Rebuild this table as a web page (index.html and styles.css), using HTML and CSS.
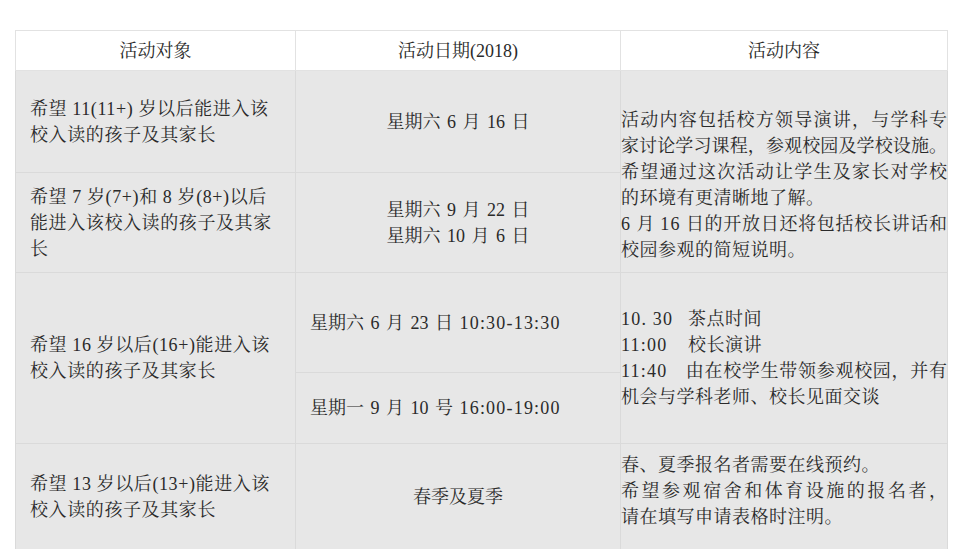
FILE: index.html
```html
<!DOCTYPE html>
<html lang="zh-CN">
<head>
<meta charset="utf-8">
<title>开放日活动</title>
<link rel="stylesheet" href="styles.css">
</head>
<body>
<table class="events">
  <colgroup>
    <col class="col-a">
    <col class="col-b">
    <col class="col-c">
  </colgroup>
  <thead>
    <tr class="head-row">
      <th>活动对象</th>
      <th>活动日期(2018)</th>
      <th>活动内容</th>
    </tr>
  </thead>
  <tbody>
    <tr class="row-1">
      <td class="who">希望 11(11+) 岁以后能进入该<br>校入读的孩子及其家长</td>
      <td class="when">星期六 6 月 16 日</td>
      <td class="what what-top" rowspan="2">
        <span class="line fill">活动内容包括校方领导演讲，与学科专</span>
        <span class="line fill">家讨论学习课程，参观校园及学校设施。</span>
        <span class="line fill">希望通过这次活动让学生及家长对学校</span>
        <span class="line">的环境有更清晰地了解。</span>
        <span class="line fill"><span class="num">6</span> 月 <span class="num">16</span> 日的开放日还将包括校长讲话和</span>
        <span class="line">校园参观的简短说明。</span>
      </td>
    </tr>
    <tr class="row-2">
      <td class="who">希望 7 岁(7+)和 8 岁(8+)以后<br>能进入该校入读的孩子及其家<br>长</td>
      <td class="when">星期六 9 月 22 日<br>星期六 10 月 6 日</td>
    </tr>
    <tr class="row-3a">
      <td class="who" rowspan="2">希望 16 岁以后(16+)能进入该<br>校入读的孩子及其家长</td>
      <td class="when when-left">星期六 6 月 23 日 <span class="num">10:30-13:30</span></td>
      <td class="what" rowspan="2">
        <span class="line"><span class="num time">10. 30</span>茶点时间</span>
        <span class="line"><span class="num time">11:00</span>校长演讲</span>
        <span class="line fill"><span class="num time-short">11:40</span>由在校学生带领参观校园，并有</span>
        <span class="line">机会与学科老师、校长见面交谈</span>
      </td>
    </tr>
    <tr class="row-3b">
      <td class="when when-left">星期一 9 月 10 号 <span class="num">16:00-19:00</span></td>
    </tr>
    <tr class="row-4">
      <td class="who">希望 13 岁以后(13+)能进入该<br>校入读的孩子及其家长</td>
      <td class="when">春季及夏季</td>
      <td class="what what-last">
        <span class="line">春、夏季报名者需要在线预约。</span>
        <span class="line fill">希望参观宿舍和体育设施的报名者，</span>
        <span class="line">请在填写申请表格时注明。</span>
      </td>
    </tr>
  </tbody>
</table>
</body>
</html>
```
FILE: styles.css
```css
html, body {
  margin: 0;
  padding: 0;
  background: #ffffff;
}

body {
  font-family: "Liberation Serif", "Noto Serif CJK SC", "Noto Sans CJK SC", serif;
  font-size: 18px;
  line-height: 26px;
  color: #2a2a2a;
}

.events {
  margin: 30px 0 0 15px;
  width: 932px;
  border-collapse: collapse;
  table-layout: fixed;
}

.col-a { width: 280px; }
.col-b { width: 325px; }
.col-c { width: 327px; }

.events th,
.events td {
  border: 1px solid #dadada;
  padding: 0;
  white-space: nowrap;
}

.head-row {
  height: 40px;
}

.events th {
  background: #ffffff;
  font-weight: normal;
  text-align: center;
  vertical-align: middle;
  border-color: #e2e2e2;
}

.events td {
  background: #e7e7e7;
  vertical-align: middle;
}

.row-1 { height: 102px; }
.row-2 { height: 100px; }
.row-3a { height: 100px; }
.row-3b { height: 71px; }
.row-4 { height: 106px; }

.events .who {
  padding-left: 14px;
  text-align: left;
  letter-spacing: 0.6px;
}

.events .when {
  text-align: center;
  word-spacing: 2px;
}

.events .when-left {
  text-align: left;
  padding-left: 14px;
}

.events .what {
  text-align: left;
  padding-left: 0;
  letter-spacing: 0.5px;
}

.events .what-top {
  vertical-align: top;
  padding-top: 36px;
}

.events .what-last {
  vertical-align: top;
  padding-top: 8px;
}

.line {
  display: block;
}

.events .fill {
  text-align: justify;
  text-align-last: justify;
  letter-spacing: 0;
}

.num {
  letter-spacing: 1.2px;
}

.time {
  display: inline-block;
  min-width: 67px;
}

.time-short {
  display: inline-block;
  min-width: 64px;
}
```
